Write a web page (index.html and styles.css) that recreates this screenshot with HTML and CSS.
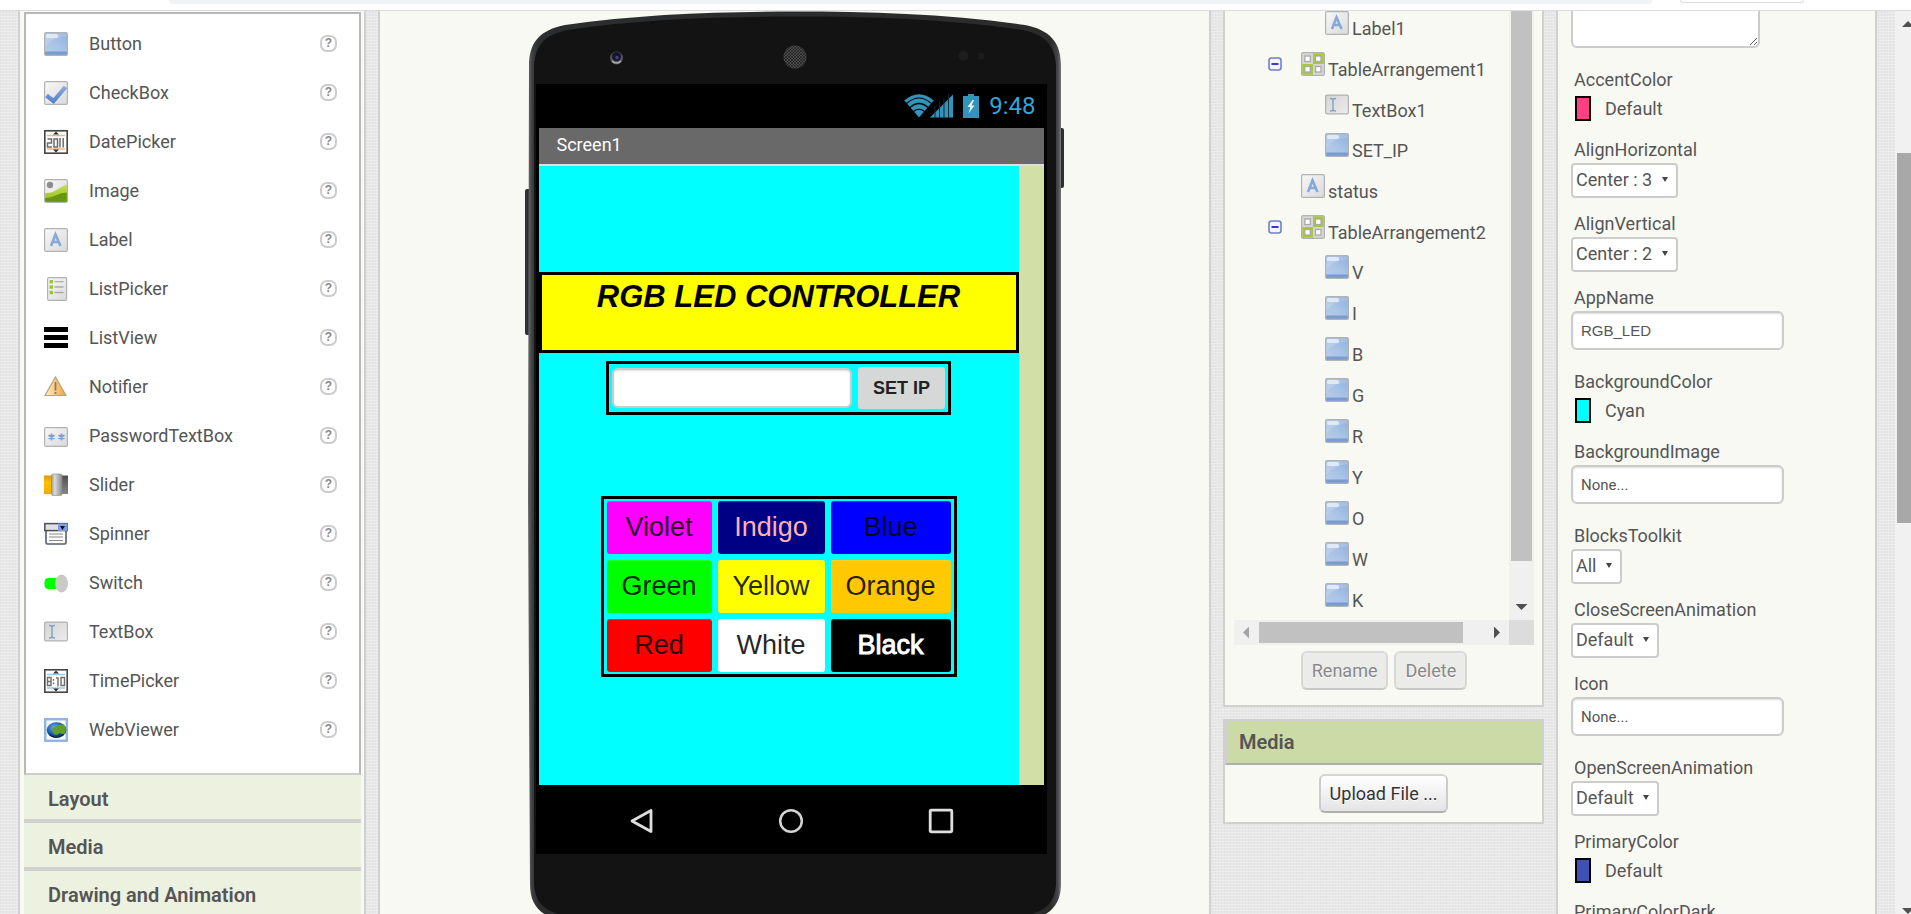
FILE: index.html
```html
<!DOCTYPE html>
<html lang="en">
<head>
<meta charset="utf-8">
<title>App Designer</title>
<link rel="stylesheet" href="styles.css">
</head>
<body>
<svg class="sprite" aria-hidden="true">
  <defs>
    <linearGradient id="g-blue" x1="0" y1="1" x2="1" y2="0"><stop offset="0" stop-color="#b9cde8"/><stop offset=".5" stop-color="#a9c3e6"/><stop offset="1" stop-color="#8fb0dd"/></linearGradient>
    <linearGradient id="g-grey" x1="0" y1="0" x2="1" y2="1"><stop offset="0" stop-color="#f8f8f8"/><stop offset="1" stop-color="#d9d9d9"/></linearGradient>
    <linearGradient id="g-greydark" x1="0" y1="0" x2="1" y2="1"><stop offset="0" stop-color="#d4d4d4"/><stop offset="1" stop-color="#ececec"/></linearGradient>
    <linearGradient id="g-leaf" x1="0" y1="0" x2="0" y2="1"><stop offset="0" stop-color="#c8dd55"/><stop offset="1" stop-color="#93bd1e"/></linearGradient>
    <linearGradient id="g-amber" x1="0" y1="0" x2="1" y2="0"><stop offset="0" stop-color="#fff0c4"/><stop offset="1" stop-color="#f0a23c"/></linearGradient>
    <linearGradient id="g-knob" x1="0" y1="0" x2="1" y2="0"><stop offset="0" stop-color="#9a9a9a"/><stop offset=".3" stop-color="#dadada"/><stop offset="1" stop-color="#8a8a8a"/></linearGradient>
    <linearGradient id="g-gold" x1="0" y1="0" x2="0" y2="1"><stop offset="0" stop-color="#d99a10"/><stop offset=".4" stop-color="#ffc000"/><stop offset="1" stop-color="#f2a900"/></linearGradient>
    <linearGradient id="g-rail" x1="0" y1="0" x2="0" y2="1"><stop offset="0" stop-color="#4e4e4e"/><stop offset="1" stop-color="#868686"/></linearGradient>
    <radialGradient id="g-globe" cx=".4" cy=".35" r=".65"><stop offset="0" stop-color="#6bb0f0"/><stop offset=".6" stop-color="#1d5fae"/><stop offset="1" stop-color="#0a2550"/></radialGradient>
    <linearGradient id="g-check" x1="0" y1="0" x2="0" y2="1"><stop offset="0" stop-color="#86a8de"/><stop offset="1" stop-color="#5b86cb"/></linearGradient>
  </defs>
  <symbol id="i-button" viewBox="0 0 24 24"><rect x=".6" y=".6" width="22.8" height="22.8" rx="1.5" fill="url(#g-blue)" stroke="#b2b2b2" stroke-width="1.2"/><path d="M1.4 15C6 8 13 5 22.6 4.500V1.400H1.400z" fill="#fff" opacity=".15"/><rect x="2" y="2" width="12" height="4" rx="1.500" fill="#e6eef9" opacity=".85"/><rect x="1.200" y="19.500" width="21.600" height="3.300" fill="#7a9bd0"/></symbol>
  <symbol id="i-checkbox" viewBox="0 0 24 24"><rect x=".6" y=".6" width="22.8" height="22.8" rx="1.500" fill="url(#g-grey)" stroke="#b2b2b2" stroke-width="1.200"/><path d="M2.500 14.500L9.500 20L21.500 6" fill="none" stroke="url(#g-check)" stroke-width="4.200"/></symbol>
  <symbol id="i-date" viewBox="0 0 24 24"><rect x=".8" y=".8" width="22.400" height="22.400" fill="#fff" stroke="#444" stroke-width="1.600"/><path d="M3 5.500h18M3 19h18" stroke="#f3b272" stroke-width="1.500"/><path d="M9 4.500l3-3 3 3zM9 19.500l3 3 3-3z" fill="#333"/><path d="M3.500 9h4v4h-4v4h4.500M10 9h3.500v8H10zM16 8v9.500M19.200 8v9.500" fill="none" stroke="#6c6c6c" stroke-width="1.500"/></symbol>
  <symbol id="i-image" viewBox="0 0 24 24"><rect x=".6" y=".6" width="22.800" height="22.800" rx="1.500" fill="url(#g-grey)" stroke="#b2b2b2" stroke-width="1.200"/><circle cx="6" cy="6" r="3.200" fill="#8d8d8d"/><path d="M1.200 14C10 15 13 9 22.800 5.500V22.800H1.200z" fill="url(#g-leaf)"/><path d="M1.200 19C10 19 13 14 22.800 13.500V22.800H1.200z" fill="#68970f"/></symbol>
  <symbol id="i-label" viewBox="0 0 24 24"><rect x=".6" y=".6" width="22.800" height="22.800" rx="1.500" fill="url(#g-grey)" stroke="#b2b2b2" stroke-width="1.200"/><path d="M7 18L11.500 6.500L16.500 18M8.500 14h6.500" fill="none" stroke="#86a8da" stroke-width="2.600"/></symbol>
  <symbol id="i-listpicker" viewBox="0 0 24 24"><rect x="3.600" y=".6" width="19" height="22.800" rx="1.500" fill="url(#g-grey)" stroke="#b2b2b2" stroke-width="1.200"/><path d="M10.500 4.700h9M10.500 10h9M10.500 15.500h9" stroke="#aaa" stroke-width="1.300"/><path d="M5.500 3h3.500v3.500H5.500zM5.500 8.300h3.500v3.500H5.500zM5.500 13.700h3.500v3.500H5.500z" fill="#9bc53a"/></symbol>
  <symbol id="i-listview" viewBox="0 0 24 24"><path d="M0 1h24v5H0zM0 9h24v5H0zM0 17h24v5H0z"/></symbol>
  <symbol id="i-notifier" viewBox="0 0 24 24"><path d="M11.500 2L22 20.500H1z" fill="url(#g-amber)" stroke="#b9a080" stroke-width="1.200"/><path d="M11.500 7v8.500M11.500 17v2" stroke="#8b7a60" stroke-width="1.800"/></symbol>
  <symbol id="i-password" viewBox="0 0 24 24"><rect x=".6" y="3.600" width="22.800" height="18.800" rx="1.500" fill="url(#g-grey)" stroke="#b2b2b2" stroke-width="1.200"/><path d="M7.500 9.500v7M4.500 11.200l6 3.600M10.500 11.200l-6 3.600M17.500 9.500v7M14.500 11.200l6 3.600M20.500 11.200l-6 3.600" stroke="#7d9fd6" stroke-width="1.800"/></symbol>
  <symbol id="i-slider" viewBox="0 0 24 24"><rect y="2.500" width="8" height="18.500" fill="url(#g-gold)"/><rect x="17" y="2.500" width="7" height="18.500" fill="url(#g-rail)"/><rect x="7.500" y="1" width="10.500" height="21.500" rx="1.500" fill="url(#g-knob)" stroke="#888" stroke-width=".6"/></symbol>
  <symbol id="i-spinner" viewBox="0 0 24 24"><rect x="2" y="8" width="20" height="14" rx="1.500" fill="#fff" stroke="#566070" stroke-width="1.600"/><rect x=".8" y="1.600" width="22.400" height="7" fill="#e0e0e0" stroke="#4a4f58" stroke-width="1.500"/><rect x="14" y="1.500" width="9.500" height="7.500" fill="#7d9fe0"/><path d="M16 4h5l-2.500 4z" fill="#111"/><path d="M5 12h14M5 15h14M5 18.500h14" stroke="#888" stroke-width="1.200"/></symbol>
  <symbol id="i-switch" viewBox="0 0 24 24"><rect x=".5" y="7" width="18" height="11" rx="4" fill="#0f0"/><ellipse cx="17.500" cy="12.500" rx="6.500" ry="9" fill="#c9c9c9"/></symbol>
  <symbol id="i-textbox" viewBox="0 0 24 24"><rect x=".6" y="2.100" width="22.800" height="18.800" rx="1.500" fill="url(#g-greydark)" stroke="#b2b2b2" stroke-width="1.200"/><path d="M5 5.500c2 0 3 .5 3 1.500 0-1 1-1.500 3-1.500M8 7v9.500M5 18c2 0 3-.5 3-1.500 0 1 1 1.500 3 1.500" fill="none" stroke="#86a0c4" stroke-width="1.400"/></symbol>
  <symbol id="i-time" viewBox="0 0 24 24"><rect x=".8" y=".8" width="22.400" height="22.400" fill="#fff" stroke="#444" stroke-width="1.600"/><path d="M3 5.500h18M3 19h18" stroke="#9cc6e6" stroke-width="1.500"/><path d="M9 4.500l3-3 3 3zM9 19.500l3 3 3-3z" fill="#333"/><path d="M3.500 8.500h3.500v8H3.500zM3.500 12.500h3.500M9.500 10v1.800M9.500 13.500v1.800M12 9h2v8.500M17 8.500h3.500v8H17z" fill="none" stroke="#6c6c6c" stroke-width="1.400"/></symbol>
  <symbol id="i-web" viewBox="0 0 24 24"><rect x="1.200" y="1.200" width="21.600" height="21.600" fill="#f4f8fd" stroke="#93b4dc" stroke-width="2.400"/><ellipse cx="12.500" cy="12" rx="9.800" ry="7.800" fill="url(#g-globe)"/><path d="M8 11C11 8 15 6 20 6.500c2 3 2.500 6 1 9-3 2-5-2-7 1-3 1-5 0-6-5.500z" fill="#5f9f2a"/><path d="M4 15c4 5 13 6 17 0-3 6-14 7-17 0z" fill="#061a3a"/></symbol>
  <symbol id="i-table" viewBox="0 0 24 24"><rect x=".6" y=".6" width="22.800" height="22.800" rx="1.500" fill="#d6d6d6" stroke="#b2b2b2" stroke-width="1.200"/><path d="M12 1.200h10.800V12H12zM1.200 12H12v10.800H1.200z" fill="#a9c83f"/><g fill="#fff" stroke="#a9a9a9" stroke-width="1.300"><rect x="3.800" y="4" width="5.500" height="5.500"/><rect x="14.500" y="4" width="5.500" height="5.500"/><rect x="3.800" y="14.500" width="5.500" height="5.500"/><rect x="14.500" y="14.500" width="5.500" height="5.500"/></g></symbol>
  <symbol id="i-minus" viewBox="0 0 14 14"><rect x="1" y="1" width="12" height="12" rx="2.500" fill="#f3f4fb" stroke="#6f80c8" stroke-width="1.600"/><path d="M3.500 7h7" stroke="#2422c8" stroke-width="1.800"/></symbol>
</svg>

<header class="browser-bar"><span class="omnibox"></span><span class="chip"></span></header>

<div class="page">
  <main class="workspace">
    <section class="panel palette">
      <div class="stack">
        <ul class="component-list">
          <li><svg class="icon"><use href="#i-button"/></svg><span>Button</span><button class="help">?</button></li>
          <li><svg class="icon"><use href="#i-checkbox"/></svg><span>CheckBox</span><button class="help">?</button></li>
          <li><svg class="icon"><use href="#i-date"/></svg><span>DatePicker</span><button class="help">?</button></li>
          <li><svg class="icon"><use href="#i-image"/></svg><span>Image</span><button class="help">?</button></li>
          <li><svg class="icon"><use href="#i-label"/></svg><span>Label</span><button class="help">?</button></li>
          <li><svg class="icon"><use href="#i-listpicker"/></svg><span>ListPicker</span><button class="help">?</button></li>
          <li><svg class="icon"><use href="#i-listview"/></svg><span>ListView</span><button class="help">?</button></li>
          <li><svg class="icon"><use href="#i-notifier"/></svg><span>Notifier</span><button class="help">?</button></li>
          <li><svg class="icon"><use href="#i-password"/></svg><span>PasswordTextBox</span><button class="help">?</button></li>
          <li><svg class="icon"><use href="#i-slider"/></svg><span>Slider</span><button class="help">?</button></li>
          <li><svg class="icon"><use href="#i-spinner"/></svg><span>Spinner</span><button class="help">?</button></li>
          <li><svg class="icon"><use href="#i-switch"/></svg><span>Switch</span><button class="help">?</button></li>
          <li><svg class="icon"><use href="#i-textbox"/></svg><span>TextBox</span><button class="help">?</button></li>
          <li><svg class="icon"><use href="#i-time"/></svg><span>TimePicker</span><button class="help">?</button></li>
          <li><svg class="icon"><use href="#i-web"/></svg><span>WebViewer</span><button class="help">?</button></li>
        </ul>
        <button class="stack-header">Layout</button>
        <button class="stack-header">Media</button>
        <button class="stack-header">Drawing and Animation</button>
      </div>
    </section>

    <section class="panel viewer">
      <div class="phone">
        <svg class="phone-body" viewBox="525 11 540 930" aria-hidden="true">
          <defs>
            <linearGradient id="g-edge" x1="0" y1="0" x2="1" y2="0"><stop offset="0" stop-color="#6a6b6c"/><stop offset=".008" stop-color="#3c3d3e"/><stop offset=".02" stop-color="#2c2d2e"/><stop offset=".98" stop-color="#2b2b2c"/><stop offset=".994" stop-color="#444546"/><stop offset="1" stop-color="#77797a"/></linearGradient>
            <pattern id="p-grill" width="3" height="3" patternUnits="userSpaceOnUse"><rect width="3" height="3" fill="#1c1c1c"/><circle cx="1.500" cy="1.500" r="1" fill="none" stroke="#666" stroke-width=".7"/></pattern>
          </defs>
          <path d="M529 189h-2q-2 0-2 2v142q0 2 2 2h2zM1060 128h2q2 0 2 2v56q0 2-2 2h-2z" fill="#2f3031"/>
          <path d="M529 66C529 42 540 30 565 25C640 14 720 11.500 795 11.500S950 14 1025 25C1050 30 1061 42 1061 66V884C1061 905 1050 917 1025 921C950 931 640 931 565 921C540 917 530 905 530 884L528 500z" fill="url(#g-edge)"/>
          <path d="M534 66C535 46 544 35 567 30C640 19 720 16.500 795 16.500S950 19 1023 30C1046 35 1055 46 1056 66V884C1055 902 1046 912 1023 916C950 926 640 926 567 916C544 912 535 902 534 884z" fill="#131313"/>
          <circle cx="616.500" cy="58" r="6.500" fill="#555"/><circle cx="616.500" cy="56.500" r="4.500" fill="#15152a"/><circle cx="617" cy="57.500" r="1.800" fill="#3c3ca0"/><path d="M612 61a6 6 0 0 0 9 0" fill="none" stroke="#aaa" stroke-width="1.500"/>
          <circle cx="795" cy="57" r="11.500" fill="url(#p-grill)"/>
          <circle cx="963.500" cy="56" r="5" fill="#1d1d1d"/><circle cx="981" cy="56" r="3.500" fill="#1d1d1d"/>
        </svg>
        <div class="screen">
          <div class="status-bar">
            <svg class="radio" viewBox="0 0 49 24" aria-hidden="true">
              <path d="M15 23.500L.3 6.500Q15-6 29.700 6.500z" fill="#3293bb"/>
              <path d="M2.500 9.500Q15-1.500 27.500 9.500M6 13.500Q15 5.500 24 13.500M9.500 17.500Q15 13 20.500 17.500" fill="none" stroke="#000" stroke-width="1.200"/>
              <path d="M26 23.500L49 .5V23.500z" fill="#3293bb"/>
              <path d="M31 24V12M35.500 24V8M40 24V4M44.500 24V0" stroke="#0b2a38" stroke-width="1"/>
            </svg>
            <svg class="battery" viewBox="0 0 16 24" aria-hidden="true"><path d="M5 0h6v2h5v22H0V2h5z" fill="#3293bb"/><path d="M9.500 6L4.500 13h3l-2 6.500 6-8H8.500l2.500-5.500z" fill="#e8f6fc"/></svg>
            <span class="clock">9:48</span>
          </div>
          <div class="app">
            <div class="title-bar">Screen1</div>
            <div class="form">
              <div class="form-body">
                <h1 class="banner">RGB LED CONTROLLER</h1>
                <div class="ip-row"><input class="ip-input" type="text" aria-label="IP address"><button class="set-ip">SET IP</button></div>
                <div class="color-grid">
                  <button class="violet">Violet</button><button class="indigo">Indigo</button><button class="blue">Blue</button>
                  <button class="green">Green</button><button class="yellow">Yellow</button><button class="orange">Orange</button>
                  <button class="red">Red</button><button class="white">White</button><button class="black">Black</button>
                </div>
              </div>
            </div>
          </div>
          <nav class="nav-bar">
            <svg class="nav-icon" viewBox="0 0 26 26"><path d="M22 2.500V23.500L3 13z" fill="none" stroke="#dedede" stroke-width="2.800" stroke-linejoin="round"/></svg>
            <svg class="nav-icon" viewBox="0 0 26 26"><circle cx="13" cy="13" r="10.800" fill="none" stroke="#d4d4d4" stroke-width="2.500"/></svg>
            <svg class="nav-icon" viewBox="0 0 26 26"><rect x="2.200" y="2.200" width="21.600" height="21.600" rx="1" fill="none" stroke="#dedede" stroke-width="2.800"/></svg>
          </nav>
        </div>
      </div>
    </section>

    <div class="side">
      <section class="panel components">
        <div class="tree-frame">
          <ul class="tree">
            <li class="leaf"><svg class="icon"><use href="#i-label"/></svg><span>Label1</span></li>
            <li><button class="toggle" aria-label="Collapse TableArrangement1"><svg><use href="#i-minus"/></svg></button><svg class="icon"><use href="#i-table"/></svg><span>TableArrangement1</span></li>
            <li class="leaf short"><svg class="icon"><use href="#i-textbox"/></svg><span>TextBox1</span></li>
            <li class="leaf"><svg class="icon"><use href="#i-button"/></svg><span>SET_IP</span></li>
            <li class="top"><svg class="icon"><use href="#i-label"/></svg><span>status</span></li>
            <li class="short"><button class="toggle" aria-label="Collapse TableArrangement2"><svg><use href="#i-minus"/></svg></button><svg class="icon"><use href="#i-table"/></svg><span>TableArrangement2</span></li>
            <li class="leaf"><svg class="icon"><use href="#i-button"/></svg><span>V</span></li>
            <li class="leaf"><svg class="icon"><use href="#i-button"/></svg><span>I</span></li>
            <li class="leaf"><svg class="icon"><use href="#i-button"/></svg><span>B</span></li>
            <li class="leaf"><svg class="icon"><use href="#i-button"/></svg><span>G</span></li>
            <li class="leaf"><svg class="icon"><use href="#i-button"/></svg><span>R</span></li>
            <li class="leaf"><svg class="icon"><use href="#i-button"/></svg><span>Y</span></li>
            <li class="leaf"><svg class="icon"><use href="#i-button"/></svg><span>O</span></li>
            <li class="leaf"><svg class="icon"><use href="#i-button"/></svg><span>W</span></li>
            <li class="leaf"><svg class="icon"><use href="#i-button"/></svg><span>K</span></li>
          </ul>
          <div class="vbar"><div class="vthumb"></div><i class="arrow down"></i></div>
          <div class="hbar"><i class="arrow left"></i><div class="hthumb"></div><i class="arrow right"></i></div>
          <div class="corner"></div>
        </div>
        <div class="actions"><button class="btn" disabled>Rename</button><button class="btn" disabled>Delete</button></div>
      </section>
      <section class="panel media">
        <h2>Media</h2>
        <div class="media-body"><button class="btn">Upload File ...</button></div>
      </section>
    </div>

    <section class="panel properties">
      <div class="prop"><textarea class="about" aria-label="AboutScreen"></textarea></div>
      <div class="prop"><span class="name">AccentColor</span><button class="color"><i class="swatch pink"></i>Default</button></div>
      <div class="prop"><label class="name" for="ah">AlignHorizontal</label><span class="select"><select id="ah"><option>Center : 3</option></select></span></div>
      <div class="prop"><label class="name" for="av">AlignVertical</label><span class="select"><select id="av"><option>Center : 2</option></select></span></div>
      <div class="prop text"><label class="name" for="an">AppName</label><input class="field" id="an" type="text" value="RGB_LED"></div>
      <div class="prop"><span class="name">BackgroundColor</span><button class="color"><i class="swatch cyan"></i>Cyan</button></div>
      <div class="prop text"><label class="name" for="bi">BackgroundImage</label><input class="field asset" id="bi" type="text" value="None..."></div>
      <div class="prop"><label class="name" for="bt">BlocksToolkit</label><span class="select"><select id="bt"><option>All</option></select></span></div>
      <div class="prop"><label class="name" for="cs">CloseScreenAnimation</label><span class="select"><select id="cs"><option>Default</option></select></span></div>
      <div class="prop text"><label class="name" for="ic">Icon</label><input class="field asset" id="ic" type="text" value="None..."></div>
      <div class="prop"><label class="name" for="os">OpenScreenAnimation</label><span class="select"><select id="os"><option>Default</option></select></span></div>
      <div class="prop"><span class="name">PrimaryColor</span><button class="color"><i class="swatch navy"></i>Default</button></div>
      <div class="prop"><span class="name">PrimaryColorDark</span></div>
    </section>
  </main>
  <div class="page-bar"><i class="arrow up"></i><div class="page-thumb"></div><i class="arrow down"></i></div>
</div>
</body>
</html>
```

FILE: styles.css
```css
* { box-sizing: border-box; }

body {
  margin: 0;
  height: 100vh;
  display: flex;
  flex-direction: column;
  overflow: hidden;
  font: 18px/22px Roboto, "Liberation Sans", sans-serif;
  color: #555;
}

ul { list-style: none; margin: 0; padding: 0; }
button, input, select, textarea { font: inherit; color: inherit; margin: 0; }
.sprite { position: absolute; width: 0; height: 0; }
.icon { width: 24px; height: 24px; flex: none; }

/* browser toolbar edge */
.browser-bar {
  flex: none;
  height: 11px;
  display: flex;
  align-items: flex-start;
  gap: 28px;
  padding: 0 107px 0 169px;
  background: #fff;
  border-bottom: 1px solid #dadce0;
  overflow: hidden;
}
.omnibox { flex: 1; height: 4px; background: #f1f3f4; border-radius: 0 0 16px 16px; }
.chip { width: 124px; height: 3px; border: 1px solid #dadce0; border-top: 0; border-radius: 0 0 16px 16px; }

.page { flex: 1; min-height: 0; display: flex; }
.workspace {
  flex: 1;
  min-width: 0;
  display: flex;
  gap: 12px;
  padding: 0 18px;
  background:
    repeating-linear-gradient(0deg, rgba(255, 255, 255, .3) 0 1px, transparent 1px 3px),
    repeating-linear-gradient(90deg, rgba(0, 0, 0, .02) 0 1px, transparent 1px 3px),
    #e7e7e7;
}
.panel { background: #f8f9f3; border: solid #d0d0d0; border-width: 0 2px; }

/* palette */
.palette { width: 348px; flex: none; padding: 1px 3px 0 4px; overflow: hidden; }
.component-list {
  background: #fff;
  border: 2px solid #b8b8b8;
  border-bottom-color: #ccc;
  padding: 5px 22px 19px 18px;
}
.component-list li { height: 49px; display: flex; align-items: center; gap: 21px; }
.component-list span { flex: 1; }
.help {
  width: 17px;
  height: 17px;
  padding: 0;
  background: #fff;
  border: 2px solid #ccc;
  border-radius: 7px;
  font: bold 12px/13px "Liberation Sans", sans-serif;
  color: #888;
}
.stack-header {
  display: block;
  width: 100%;
  height: 48px;
  padding: 4px 24px 0;
  border: 0;
  border-bottom: 4px solid #d0d0d0;
  background: #edf1e0;
  text-align: left;
  font-size: 20px;
  font-weight: 600;
}

/* viewer and phone */
.viewer { flex: 1; min-width: 0; overflow: hidden; }
.phone { position: relative; width: 540px; height: 930px; margin: 0 auto; padding: 73px 18px 0 11px; }
.phone-body { position: absolute; inset: 0; width: 100%; height: 100%; }
.screen { position: relative; height: 770px; display: flex; flex-direction: column; padding: 0 3px; background: #000; }
.status-bar { height: 44px; display: flex; align-items: center; justify-content: flex-end; gap: 10px; padding: 0 8px; }
.radio { width: 49px; height: 24px; }
.battery { width: 16px; height: 24px; }
.clock { font-size: 24px; color: #33a5d6; }
.app { flex: 1; display: flex; flex-direction: column; }
.title-bar { height: 38px; padding: 6px 18px; background: #696969; border-bottom: 2px solid #ddd; color: #fff; }
.form { flex: 1; background: #d2dfa6; padding-right: 25px; }
.form-body { height: 100%; display: flex; flex-direction: column; align-items: center; padding-top: 106px; background: #0ff; }
.banner {
  width: 100%;
  height: 81px;
  margin: 0;
  border: 3px solid #000;
  background: #ff0;
  color: #000;
  text-align: center;
  font: italic bold 31px/43px "Liberation Sans", sans-serif;
}
.ip-row { display: flex; align-items: center; gap: 6px; margin-top: 8px; padding: 3px; border: 3px solid #000; }
.ip-input { width: 240px; height: 40px; border: 2px solid #ccc; border-radius: 6px; background: #fff; box-shadow: inset 0 1px 2px #ddd; }
.set-ip { width: 87px; height: 42px; padding: 0; border: 0; border-radius: 3px; background: #d6d7d7; color: #222; font: bold 18px "Liberation Sans", sans-serif; }
.color-grid {
  display: grid;
  grid-template-columns: 105px 107px 120px;
  grid-auto-rows: 53px;
  gap: 6px;
  margin-top: 81px;
  padding: 2px 3px;
  border: 3px solid #000;
}
.color-grid button { padding: 0; border: 0; border-radius: 3px; color: rgba(0, 0, 0, .87); font: 27px "Liberation Sans", sans-serif; box-shadow: inset 0 1px rgba(255, 255, 255, .15); }
.color-grid .violet { background: #f0f; }
.color-grid .indigo { background: #000084; color: #ffafaf; }
.color-grid .blue { background: #00f; }
.color-grid .green { background: #0f0; }
.color-grid .yellow { background: #ff0; }
.color-grid .orange { background: #ffc800; }
.color-grid .red { background: #f00; }
.color-grid .white { background: #fff; }
.color-grid .black { background: #000; color: #fff; -webkit-text-stroke: 1px #fff; }
.nav-bar { height: 69px; display: flex; align-items: center; justify-content: space-between; padding: 2px 90px 0; }
.nav-icon { width: 26px; height: 26px; }

/* component tree */
.side { width: 321px; flex: none; display: flex; flex-direction: column; gap: 12px; }
.components { padding: 0 8px 15px 9px; border-bottom-width: 2px; }
.tree-frame { display: grid; grid-template-columns: 1fr 25px; grid-template-rows: 609px 25px; }
.tree { overflow: hidden; }
.tree li { height: 41px; display: flex; align-items: flex-start; gap: 3px; padding-left: 34px; white-space: nowrap; }
.tree .short { height: 40px; }
.tree .leaf { padding-left: 91px; }
.tree .top { padding-left: 67px; }
.tree span { padding-top: 7px; }
.toggle { width: 14px; height: 14px; padding: 0; margin: 5px 16px 0 0; border: 0; background: none; }
.toggle svg { display: block; width: 14px; height: 14px; }
.vbar { display: flex; flex-direction: column; align-items: center; justify-content: space-between; padding-bottom: 10px; background: #f0f0f0; }
.vthumb { width: 21px; height: 550px; background: #c1c1c1; }
.hbar { display: flex; align-items: center; padding: 0 9px; background: #f0f0f0; }
.hthumb { flex: 1; height: 21px; margin: 0 31px 0 10px; background: #c1c1c1; }
.corner { background: #dcdcdc; }
.arrow { display: block; flex: none; background: #505050; }
.arrow.down { width: 12px; height: 6px; clip-path: polygon(0 0, 100% 0, 50% 100%); }
.arrow.up { width: 12px; height: 6px; clip-path: polygon(0 100%, 100% 100%, 50% 0); }
.arrow.left { width: 6px; height: 12px; background: #a3a3a3; clip-path: polygon(100% 0, 100% 100%, 0 50%); }
.arrow.right { width: 6px; height: 12px; clip-path: polygon(0 0, 0 100%, 100% 50%); }
.actions { display: flex; justify-content: center; gap: 6px; padding-top: 6px; }
.btn {
  height: 39px;
  padding: 0 9px;
  border: 2px solid #ccc;
  border-color: #d4d4d4 #ccc #b0b0b0;
  border-radius: 6px;
  background: linear-gradient(#fff, #e4e4e4);
  color: #333;
  text-shadow: 0 1px #fff;
}
.btn:disabled { background: #ebebe9; border-color: #dadad8 #d8d8d6 #c8c8c6; color: #888; }

.media { border-width: 2px; }
.media h2 {
  margin: 0;
  padding: 1px 12px 0;
  font-size: 20px;
  font-weight: 600;
  line-height: 41px;
  background: #cbdaa6;
  border: solid #d0d0d0;
  border-width: 0 1px 2px 2px;
  border-bottom-color: #aeb0a8;
}
.media-body { display: flex; justify-content: center; padding: 9px; }

/* properties */
.properties { width: 321px; flex: none; padding: 0 13px; overflow: hidden; }
.prop { display: flex; flex-direction: column; align-items: flex-start; margin-bottom: 15px; }
.prop.text { margin-bottom: 21px; }
.name { padding: 0 3px 2px; }
.about { width: 189px; height: 37px; margin-bottom: 6px; border: 2px solid #ccc; border-top: 0; border-radius: 0 0 6px 6px; background: #fff; }
.color { display: flex; align-items: center; gap: 14px; height: 31px; padding: 0 4px; border: 0; background: none; }
.swatch { width: 16px; height: 25px; border: 2px solid #000; }
.pink { background: #ff4081; }
.cyan { background: #0ff; }
.navy { background: #3f51b5; }
.select { position: relative; display: inline-flex; }
.select select {
  appearance: none;
  height: 35px;
  padding: 0 23px 2px 3px;
  border: 2px solid #ccc;
  border-radius: 4px;
  background: #fff;
}
.select::after { content: ""; position: absolute; right: 10px; top: 14px; width: 6px; height: 5px; background: #444; clip-path: polygon(0 0, 100% 0, 50% 100%); pointer-events: none; }
.field {
  width: 213px;
  height: 39px;
  padding: 0 8px;
  border: 2px solid #ccc;
  border-radius: 6px;
  background: #fff;
  box-shadow: inset 0 1px 2px #ddd;
  font: 15px "Liberation Sans", sans-serif;
}
.field.asset { font-family: Roboto, sans-serif; font-size: 15px; }

/* page scrollbar */
.page-bar { width: 16px; flex: none; display: flex; flex-direction: column; align-items: flex-start; padding: 10px 0 0 2px; background: #f1f1f1; overflow: hidden; }
.page-bar .arrow { margin-left: 5px; }
.page-thumb { width: 100%; height: 370px; margin: 126px 0 auto; background: #a8a8a8; flex: none; }
```
